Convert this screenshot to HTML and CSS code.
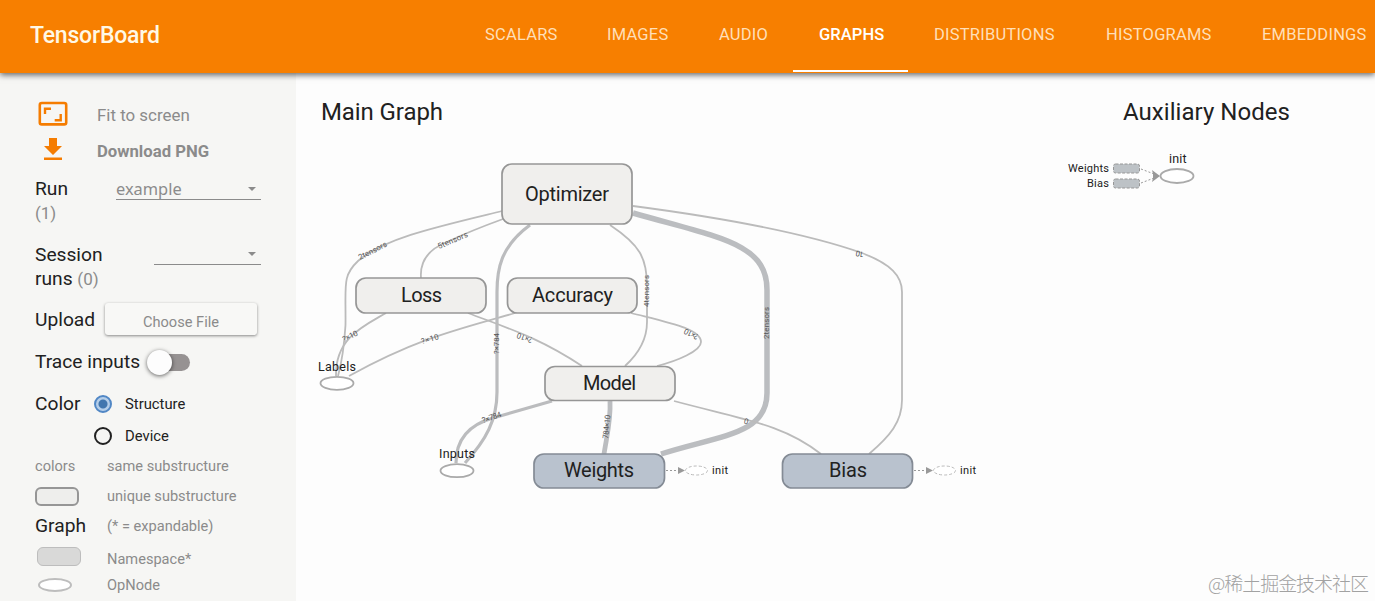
FILE: index.html
```html
<!DOCTYPE html>
<html lang="en">
<head>
<meta charset="utf-8">
<title>TensorBoard</title>
<link rel="stylesheet" href="styles.css">
</head>
<body>
<header class="topbar">
  <h1 class="brand">TensorBoard</h1>
  <nav class="tabs">
    <a class="tab">SCALARS</a>
    <a class="tab">IMAGES</a>
    <a class="tab">AUDIO</a>
    <a class="tab active">GRAPHS</a>
    <a class="tab">DISTRIBUTIONS</a>
    <a class="tab">HISTOGRAMS</a>
    <a class="tab">EMBEDDINGS</a>
  </nav>
</header>
<div class="workspace">
  <aside class="sidebar">
    <div class="action">
      <svg class="fit-icon" width="36" height="36" viewBox="0 0 36 36"><rect x="4.800" y="6" width="26.400" height="21.400" rx="2" fill="none" stroke="#f57c00" stroke-width="2.600"/><path d="M10 17v-5.200h6M25.700 17v6.200h-6" fill="none" stroke="#f57c00" stroke-width="2.400"/></svg>
      <span class="fit">Fit to screen</span>
    </div>
    <div class="action">
      <svg width="36" height="36" viewBox="0 0 36 36" fill="#f57c00"><path d="M14 4h8v8h5l-9 9-9-9h5zM9 23.500h18v2.600H9z"/></svg>
      <b class="download">Download PNG</b>
    </div>
    <div class="field run">
      <div class="label">Run<br><span class="count">(1)</span></div>
      <div class="select wide">example<i class="caret"></i></div>
    </div>
    <div class="field session">
      <div class="label">Session<br>runs <span class="count">(0)</span></div>
      <div class="select"><i class="caret"></i></div>
    </div>
    <div class="field upload"><span class="label">Upload</span><button class="choose">Choose File</button></div>
    <div class="field trace"><span class="label">Trace inputs</span><span class="toggle"><i class="knob"></i></span></div>
    <div class="field choice"><span class="label">Color</span><i class="radio on"></i><span>Structure</span></div>
    <div class="field choice"><span class="label"></span><i class="radio"></i><span>Device</span></div>
    <div class="legend"><span>colors</span><span>same substructure</span></div>
    <div class="legend"><i class="swatch"></i><span>unique substructure</span></div>
    <div class="legend graph"><span class="label">Graph</span><span>(* = expandable)</span></div>
    <div class="legend namespace"><i class="swatch solid"></i><span>Namespace*</span></div>
    <div class="legend opnode"><i class="swatch oval"></i><span>OpNode</span></div>
  </aside>
  <main class="canvas">
    <svg class="scene" width="1079" height="528" viewBox="296 73 1079 528">
      <g class="heading">
        <text x="321" y="120" textLength="122">Main Graph</text>
        <text x="1123" y="120" textLength="167">Auxiliary Nodes</text>
      </g>
      <g class="edges">
        <path d="M502 211C440 226 384 238 358 261C342 276 346 285 345.500 325C344 350 341 365 338 376"/>
        <path d="M503 219Q470 231 447 242Q419 253 421 278"/>
        <path d="M386 313C366 325 335 337 336 376"/>
        <path d="M515 313C460 329 420 337 349 376"/>
        <path class="mid" d="M530 225C500 247 497 270 497 292V392C497 420 486 440 465 463"/>
        <path d="M610 225C640 245 647 258 647 286V322C647 342 636 356 625 366"/>
        <path d="M468 313C510 329 540 338 582 366"/>
        <path d="M631 313C670 323 701 329 701 342C701 351 677 361 657 366"/>
        <path class="mid" d="M552 401L493 418C468 425 456 440 456 463"/>
        <path class="heavy" d="M610 401C611 420 607 435 604 454"/>
        <path class="heaviest" d="M633 213C720 238 767 243 767 290V393C767 435 720 435 661 454"/>
        <path d="M633 206Q785 226 862 253C891 264 902 276 902 292V400C902 422 890 436 869 454"/>
        <path d="M674 401C745 420 783 424 821 454"/>
      </g>
      <g class="edge-text">
        <text transform="translate(360 260) rotate(-27)" textLength="31">2tensors</text>
        <text transform="translate(439 249) rotate(-23)" textLength="32">5tensors</text>
        <text transform="translate(344 342) rotate(-26)" textLength="16">?×10</text>
        <text transform="translate(422 344) rotate(-16)" textLength="18">?×10</text>
        <text transform="translate(533 338) rotate(200)" textLength="16">?×10</text>
        <text transform="translate(499 354) rotate(-90)" textLength="21">?×784</text>
        <text transform="translate(649 307) rotate(-90)" textLength="32">4tensors</text>
        <text transform="translate(699 335) rotate(207)" textLength="15">?×10</text>
        <text transform="translate(483 423) rotate(-19)" textLength="20">?×784</text>
        <text transform="translate(608 439) rotate(-84)" textLength="24">784×10</text>
        <text transform="translate(769 339) rotate(-90)" textLength="32">2tensors</text>
        <text transform="translate(864 252) rotate(190)" textLength="8">10</text>
        <text transform="translate(749 419) rotate(193)" textLength="4">0</text>
      </g>
      <g class="nodes">
        <rect x="502" y="164" width="130" height="60" rx="10"/>
        <rect x="356" y="278" width="130" height="35" rx="10"/>
        <rect x="507.500" y="278" width="129.500" height="35" rx="10"/>
        <rect x="545" y="366.500" width="130" height="34" rx="10"/>
        <rect class="blue" x="534" y="454" width="130.500" height="34" rx="10"/>
        <rect class="blue" x="782.500" y="454" width="130" height="34" rx="10"/>
      </g>
      <g class="node-text">
        <text x="525" y="201" textLength="84">Optimizer</text>
        <text x="401" y="302" textLength="41">Loss</text>
        <text x="532" y="302" textLength="81">Accuracy</text>
        <text x="583" y="390" textLength="53">Model</text>
        <text x="564" y="477" textLength="70">Weights</text>
        <text x="829" y="477" textLength="38">Bias</text>
      </g>
      <g class="ops">
        <ellipse cx="337" cy="383.300" rx="16.500" ry="6.500"/>
        <ellipse cx="457" cy="470.700" rx="16.500" ry="6.500"/>
        <ellipse cx="1177" cy="176" rx="16.500" ry="7"/>
        <ellipse class="ghost" cx="696.500" cy="470.500" rx="11" ry="4.500"/>
        <ellipse class="ghost" cx="944.500" cy="470.500" rx="11" ry="4.500"/>
      </g>
      <g class="op-text">
        <text x="318" y="371" textLength="38">Labels</text>
        <text x="439" y="458" textLength="36">Inputs</text>
        <text x="1169" y="163" textLength="17.500">init</text>
      </g>
      <g class="tiny-text">
        <text x="712" y="474" textLength="16">init</text>
        <text x="960" y="474" textLength="16">init</text>
        <text x="1068" y="172" textLength="41">Weights</text>
        <text x="1087" y="187" textLength="22">Bias</text>
      </g>
      <g class="links">
        <path d="M666 470.500H679M914 470.500H927M1141 169L1154 174M1141 183L1154 178"/>
      </g>
      <g class="arrows"><path d="M678 467l7 3.500-7 3.500zM926 467l7 3.500-7 3.500zM1152 170l8 6-8 6 1-4v-4z"/></g>
      <g class="chips"><rect x="1113.500" y="164" width="26" height="9" rx="2"/><rect x="1113.500" y="179" width="26" height="9" rx="2"/></g>
      <text class="credit" x="1208" y="591" textLength="161">@稀土掘金技术社区</text>
    </svg>
  </main>
</div>
</body>
</html>
```
FILE: styles.css
```css
* { box-sizing: border-box; }
body { margin: 0; height: 601px; overflow: hidden; background: #fdfdfd; font-family: Roboto, sans-serif; color: #212121; }
.topbar { position: relative; z-index: 1; display: flex; height: 73px; background: #f77f00; box-shadow: 0 2px 6px rgba(0,0,0,.6); }
.brand { flex: 0 0 460px; margin: 0; padding: 0 0 2px 30px; line-height: 71px; font-size: 23px; font-weight: 500; letter-spacing: -.2px; color: #fff8e6; }
.tabs { display: grid; flex: none; grid-template-columns: 122px 112px 100px 115px 172px 156px 156px; }
.tab { padding-left: 25px; line-height: 69px; font-size: 16.500px; font-weight: 400; letter-spacing: .22px; color: #ffdfb8; white-space: nowrap; }
.tab.active { margin: 0 1px 1px -1px; padding-left: 26px; border-bottom: 2px solid #fff; color: #fff; font-weight: 500; letter-spacing: .1px; }
.workspace { display: flex; height: 528px; }
.sidebar { flex: 0 0 296px; padding: 23px 35px 0; background: #f6f6f4; overflow: hidden; font-size: 14.500px; }
.action { display: flex; align-items: center; height: 37px; color: #8b8b8b; font-size: 16.900px; }
.action svg { flex: none; margin-right: 26px; }
.download { font-size: 16.700px; }
.field { display: flex; align-items: flex-start; }
.label { color: #212121; font-size: 19.200px; line-height: 24px; white-space: nowrap; }
.count { color: #8b8b8b; font-size: 17px; }
.run { height: 66px; padding-top: 6px; }
.session { height: 66px; padding-top: 6px; }
.run .label { padding-top: 1px; line-height: 23.500px; }
.session .label { padding-top: 1px; line-height: 23.500px; }
.select { display: flex; justify-content: space-between; align-items: center; margin-left: auto; width: 107px; height: 24px; border-bottom: 1px solid #8b8b8b; color: #8b8b8b; font: 16.400px "Noto Sans", sans-serif; }
.select.wide { width: 145px; padding-top: 1px; }
.session .select { height: 23px; }
.caret { margin: 2px 5px 0 auto; border: 4px solid transparent; border-top-color: #8b8b8b; border-bottom: 0; }
.upload { align-items: center; height: 36px; justify-content: space-between; }
.choose { width: 152px; height: 32px; margin: 0 4px 3px 0; padding: 6px 0 0; border: 0; border-radius: 3px; background: #f8f8f6; box-shadow: 0 1px 3px rgba(0,0,0,.45); color: #8b8b8b; font: 14.600px Roboto, sans-serif; }
.trace { align-items: center; height: 48px; }
.toggle { width: 41px; height: 17px; margin: 0 0 0 9px; border-radius: 9px; background: #969292; }
.knob { display: block; width: 25px; height: 25px; margin: -4px 0 0 -2px; border-radius: 50%; background: #fdfdfd; box-shadow: 0 1px 4px rgba(0,0,0,.6); }
.choice { height: 34px; align-items: center; padding-top: 2px; font-size: 14.800px; }
.choice + .choice { height: 31px; padding: 0; }
.choice .label { width: 59px; }
.radio { width: 18px; height: 18px; margin-right: 13px; border: 2px solid #212121; border-radius: 50%; }
.radio.on { border-color: #5187c5; background: radial-gradient(circle, #4276ae 0 4px, #b5cee9 5px); }
.legend { display: grid; grid-template-columns: 72px 1fr; align-items: center; height: 30px; color: #8b8b8b; font-size: 14.600px; white-space: nowrap; }
.legend.graph { height: 29px; }
.namespace { height: 34px; padding-top: 3px; }
.opnode { height: 22px; }
.swatch { width: 44px; height: 19px; border: 2px solid #969696; border-radius: 6px; background: #eeeeec; }
.swatch.solid { margin: -5px 0 0 2px; border: 1.500px solid #bdbdbd; background: #d9d9d8; }
.swatch.oval { width: 34px; height: 14px; margin-left: 3px; border-color: #bdbdbd; border-radius: 50%; background: #fff; }
.canvas { flex: 1; }
.scene { display: block; font-family: Roboto, sans-serif; fill: #212121; }
.heading { font-size: 24px; }
.edges { fill: none; stroke: #bbb; stroke-width: 1.800px; }
.edges .mid { stroke: #bbbcbe; stroke-width: 3.200px; }
.edges .heavy { stroke: #bbbdc0; stroke-width: 4.800px; }
.edges .heaviest { stroke: #bbbdc0; stroke-width: 5.500px; }
.edge-text { font-size: 7.800px; fill: #555; }
.nodes rect { fill: #f0efed; stroke: #969696; stroke-width: 1.700px; }
.nodes .blue { fill: #b9c2ce; stroke: #848b95; }
.node-text { font-size: 20px; }
.ops ellipse { fill: #fff; stroke: #aaa; stroke-width: 1.800px; }
.ops .ghost { stroke: #bbb; stroke-width: 1px; stroke-dasharray: 3 2; }
.op-text { font-size: 12.500px; }
.tiny-text { font-size: 11px; }
.links { fill: none; stroke: #999; stroke-dasharray: 2 2; }
.arrows { fill: #999; }
.chips rect { fill: #bdc2c6; stroke: #969696; stroke-dasharray: 3 1.500; }
.credit { font: 300 19px "Noto Sans CJK SC", sans-serif; fill: #a2a2a2; }
```
